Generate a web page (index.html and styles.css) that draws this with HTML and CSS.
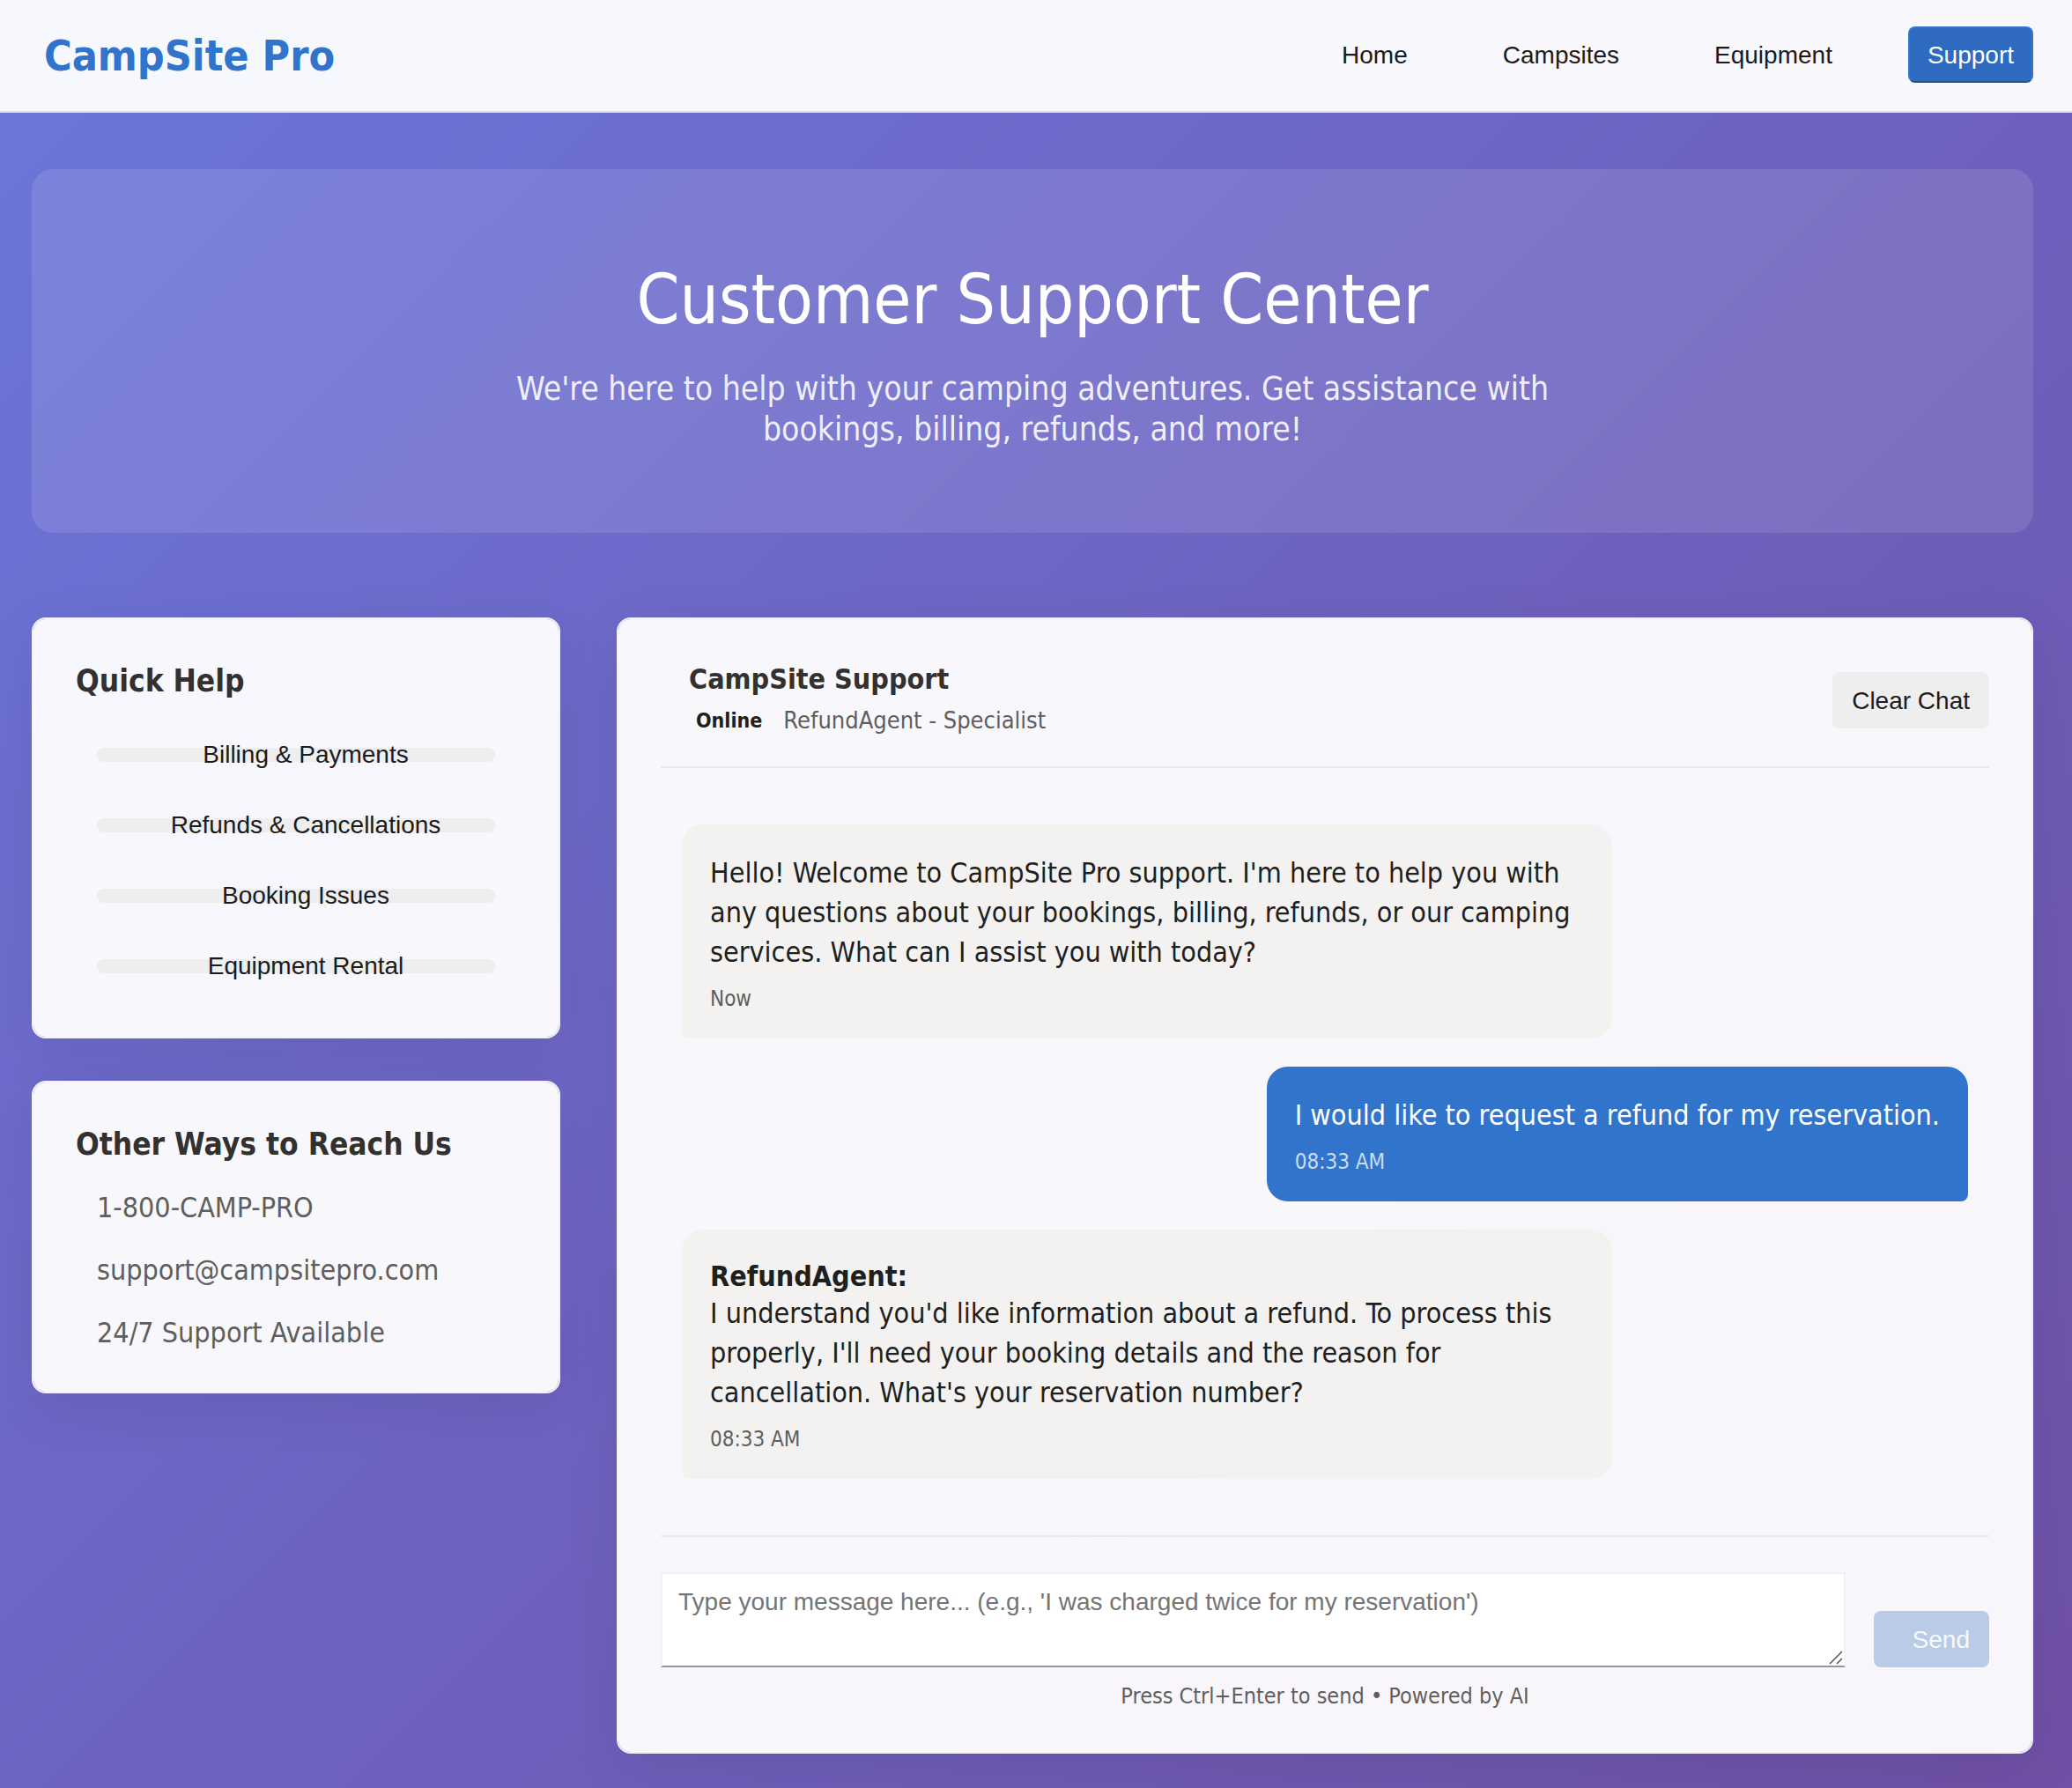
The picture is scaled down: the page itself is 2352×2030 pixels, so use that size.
FILE: index.html
```html
<!DOCTYPE html>
<html lang="en">
<head>
<meta charset="utf-8">
<title>CampSite Pro - Customer Support</title>
<meta name="viewport" content="width=device-width, initial-scale=1">
<link rel="stylesheet" href="styles.css">
</head>
<body>
<header class="site-header">
  <div class="logo">CampSite Pro</div>
  <nav class="nav" aria-label="Main">
    <button type="button" class="btn btn-stealth">Home</button>
    <button type="button" class="btn btn-stealth">Campsites</button>
    <button type="button" class="btn btn-stealth">Equipment</button>
    <button type="button" class="btn btn-accent">Support</button>
  </nav>
</header>
<main class="page">
  <section class="hero">
    <h1 class="hero-title">Customer Support Center</h1>
    <p class="hero-text">We're here to help with your camping adventures. Get assistance with bookings, billing, refunds, and more!</p>
  </section>
  <div class="support-grid">
    <aside class="sidebar">
      <section class="card help-card">
        <h2 class="card-title">Quick Help</h2>
        <div class="help-list">
          <button type="button" class="help-btn">Billing &amp; Payments</button>
          <button type="button" class="help-btn">Refunds &amp; Cancellations</button>
          <button type="button" class="help-btn">Booking Issues</button>
          <button type="button" class="help-btn">Equipment Rental</button>
        </div>
      </section>
      <section class="card contact-card">
        <h2 class="card-title">Other Ways to Reach Us</h2>
        <ul class="contact-list">
          <li>1-800-CAMP-PRO</li>
          <li>support@campsitepro.com</li>
          <li>24/7 Support Available</li>
        </ul>
      </section>
    </aside>
    <section class="card chat">
      <header class="chat-header">
        <div class="agent">
          <h2 class="agent-name">CampSite Support</h2>
          <div class="agent-status">
            <span class="badge">Online</span>
            <span class="agent-role">RefundAgent - Specialist</span>
          </div>
        </div>
        <button type="button" class="btn btn-neutral">Clear Chat</button>
      </header>
      <div class="messages">
        <article class="bubble">
          <p class="bubble-text">Hello! Welcome to CampSite Pro support. I'm here to help you with any questions about your bookings, billing, refunds, or our camping services. What can I assist you with today?</p>
          <time class="bubble-time">Now</time>
        </article>
        <article class="bubble bubble-user">
          <p class="bubble-text">I would like to request a refund for my reservation.</p>
          <time class="bubble-time">08:33 AM</time>
        </article>
        <article class="bubble">
          <strong class="bubble-author">RefundAgent:</strong>
          <p class="bubble-text">I understand you'd like information about a refund. To process this properly, I'll need your booking details and the reason for cancellation. What's your reservation number?</p>
          <time class="bubble-time">08:33 AM</time>
        </article>
      </div>
      <form class="composer">
        <div class="composer-row">
          <div class="field">
            <textarea class="input" rows="2" aria-label="Message" placeholder="Type your message here... (e.g., 'I was charged twice for my reservation')"></textarea>
            <svg class="grip" viewBox="0 0 16 16" aria-hidden="true"><path d="M1 15 15 1M9 15l6-6" fill="none" stroke="#555" stroke-width="1.5"/></svg>
          </div>
          <button type="submit" class="btn btn-send" disabled>Send</button>
        </div>
        <p class="hint">Press Ctrl+Enter to send • Powered by AI</p>
      </form>
    </section>
  </div>
</main>
</body>
</html>
```
FILE: styles.css
```css
*,
*::before,
*::after {
  box-sizing: border-box;
}

body {
  margin: 0;
  min-height: 100vh;
  background: linear-gradient(135deg, #6b76da 0%, #6f50a6 100%);
  color: #201f1e;
  font-family: "DejaVu Sans Condensed", "Noto Sans", sans-serif;
  font-size: 32px;
  line-height: 45px;
}

h1,
h2,
p,
ul {
  margin: 0;
  padding: 0;
}

/* Buttons */
.btn {
  height: 64px;
  padding: 2px 20px 0;
  border: 2px solid transparent;
  border-radius: 8px;
  background: transparent;
  color: #1b1b1b;
  font: 28px "Liberation Sans", Arial, sans-serif;
}

.btn-accent {
  border-color: #3277cd #3277cd #24529a;
  background: #2d6ac0;
  color: #fff;
}

.btn-neutral {
  background: #eee;
}

.btn-send {
  padding-left: 42px;
  background: #bacbe8;
  color: #f8f8fd;
}

/* Header */
.site-header {
  display: flex;
  align-items: center;
  justify-content: space-between;
  height: 128px;
  padding: 0 44px 2px 50px;
  border-bottom: 2px solid #dfdfe3;
  background: rgba(255, 255, 255, 0.95);
}

.logo {
  padding-top: 2px;
  color: #3174cc;
  font-size: 48px;
  font-weight: 700;
}

.nav {
  display: flex;
  gap: 64px;
}

/* Page */
.page {
  padding: 64px 44px 39px 36px;
}

.hero {
  padding: 96px 64px 94px;
  border-radius: 24px;
  background: rgba(255, 255, 255, 0.11);
  text-align: center;
}

.hero-title {
  margin-bottom: 27px;
  color: #fff;
  font-size: 78px;
  font-weight: 400;
  line-height: 104px;
}

.hero-text {
  max-width: 1200px;
  margin: 0 auto;
  color: rgba(255, 255, 255, 0.9);
  font-size: 37px;
  line-height: 46px;
}

.support-grid {
  display: grid;
  grid-template-columns: 600px minmax(0, 1fr);
  gap: 64px;
  align-items: start;
  margin-top: 96px;
}

.sidebar {
  display: grid;
  gap: 48px;
}

.card {
  padding: 48px;
  border: 2px solid #f3f3f6;
  border-radius: 16px;
  background: rgba(255, 255, 255, 0.95);
  background-clip: padding-box;
  box-shadow: 0 16px 64px rgba(0, 0, 0, 0.08);
}

.card-title {
  color: #323130;
  font-size: 35px;
  line-height: 44px;
}

.help-list {
  display: grid;
  gap: 64px;
  padding: 54px 24px 24px;
}

.help-btn {
  display: flex;
  align-items: center;
  justify-content: center;
  height: 16px;
  padding: 0 0 0 22px;
  border: 0;
  border-radius: 8px;
  background: #eee;
  color: #1b1b1b;
  font: 28px "Liberation Sans", Arial, sans-serif;
  white-space: nowrap;
}

.contact-card {
  padding-bottom: 44px;
}

.contact-list {
  display: grid;
  gap: 26px;
  padding: 28px 24px 0;
  color: #605e5c;
  list-style: none;
}

/* Chat */
.chat-header {
  display: flex;
  align-items: center;
  justify-content: space-between;
  padding: 0 0 32px 32px;
  border-bottom: 2px solid #e9e9eb;
}

.agent-name {
  color: #323130;
  font-size: 32px;
  line-height: 40px;
}

.agent-status {
  display: flex;
  align-items: center;
  gap: 24px;
  margin-top: 7px;
  padding-left: 8px;
  line-height: 40px;
}

.badge {
  font-size: 23px;
  font-weight: 700;
}

.agent-role {
  color: #605e5c;
  font-size: 27px;
}

.messages {
  display: flex;
  flex-direction: column;
  align-items: flex-start;
  gap: 32px;
  padding: 64px 24px;
}

.bubble {
  display: flex;
  flex-direction: column;
  max-width: calc((100% + 48px) * 0.7);
  padding: 33px 32px 29px;
  border-radius: 24px 24px 24px 8px;
  background: #f3f2f1;
}

.bubble-user {
  align-self: flex-end;
  border-radius: 24px 24px 8px 24px;
  background: #3174cc;
  color: #fff;
}

.bubble-author {
  line-height: 40px;
}

.bubble-time {
  margin-top: 14px;
  color: #605e5c;
  font-size: 24px;
  line-height: 32px;
}

.bubble-user .bubble-time {
  color: rgba(255, 255, 255, 0.75);
}

.composer {
  padding-top: 40px;
  border-top: 2px solid #e9e9eb;
}

.composer-row {
  display: flex;
  align-items: flex-end;
  gap: 32px;
}

.field {
  position: relative;
  flex: 1;
  display: flex;
}

.input {
  flex: 1;
  height: 108px;
  padding: 14px 18px;
  border: 2px solid #f3f2f1;
  border-bottom-color: #979593;
  background: #fff;
  color: #1b1b1b;
  font: 28px/36px "Liberation Sans", Arial, sans-serif;
  resize: none;
}

.input::placeholder {
  color: #757575;
}

.grip {
  position: absolute;
  right: 3px;
  bottom: 3px;
  width: 16px;
  height: 16px;
  pointer-events: none;
}

.hint {
  margin-top: 18px;
  color: #605e5c;
  font-size: 25px;
  line-height: 30px;
  text-align: center;
}
```
